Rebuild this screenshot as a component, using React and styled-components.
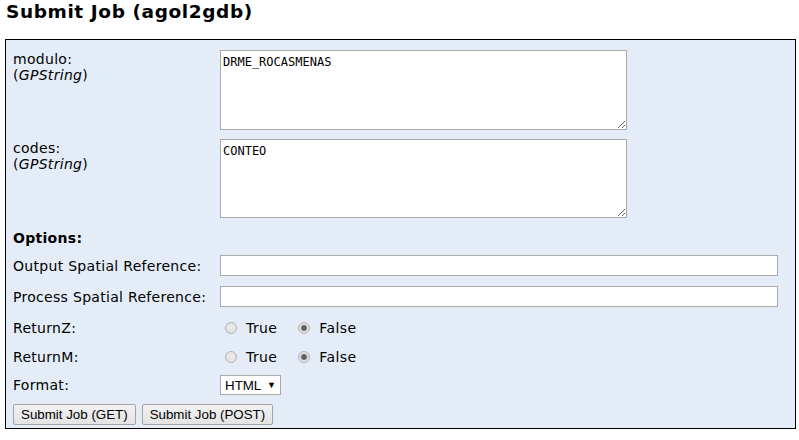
import styled, { createGlobalStyle } from 'styled-components';

const GlobalStyle = createGlobalStyle`
    html, body {
        margin: 0;
        padding: 0;
        background: #ffffff;
    }
    body {
        font-family: "DejaVu Sans", Verdana, sans-serif;
        color: #000000;
    }
`

function RadioPair({ value }) {
    return (
        <RadioGroup>
            <RadioOption>
                <RadioDot checked={value === true} />
                <RadioText>True</RadioText>
            </RadioOption>
            <RadioOption>
                <RadioDot checked={value === false} />
                <RadioText>False</RadioText>
            </RadioOption>
        </RadioGroup>
    );
}

function App() {
    return (
        <Page>
            <GlobalStyle />
            <Title>Submit Job (agol2gdb)</Title>
            <Panel>
                <Row align="start">
                    <Label pad={1}>
                        modulo:<br />
                        (<i>GPString</i>)
                    </Label>
                    <TextArea h={80} defaultValue="DRME_ROCASMENAS" />
                </Row>
                <Row align="start" top={9}>
                    <Label pad={1}>
                        codes:<br />
                        (<i>GPString</i>)
                    </Label>
                    <TextArea h={79} defaultValue="CONTEO" />
                </Row>
                <Heading>Options:</Heading>
                <Row top={9}>
                    <Label>Output Spatial Reference:</Label>
                    <TextInput />
                </Row>
                <Row top={10}>
                    <Label>Process Spatial Reference:</Label>
                    <TextInput />
                </Row>
                <Row top={11} h={20}>
                    <Label>ReturnZ:</Label>
                    <RadioPair value={false} />
                </Row>
                <Row top={9} h={20}>
                    <Label>ReturnM:</Label>
                    <RadioPair value={false} />
                </Row>
                <Row top={8} h={20}>
                    <Label>Format:</Label>
                    <FakeSelect>
                        <span>HTML</span>
                        <Arrow>▼</Arrow>
                    </FakeSelect>
                </Row>
                <ButtonBar>
                    <Button>Submit Job (GET)</Button>
                    <Button>Submit Job (POST)</Button>
                </ButtonBar>
            </Panel>
        </Page>
    );
}

const Page = styled.div`
    padding: 0 3px 0 5px;
`

const Title = styled.h2`
    margin: 0;
    padding: 1px 0 0 1px;
    height: 39px;
    box-sizing: border-box;
    font-size: 18.5px;
    line-height: 22px;
    font-weight: bold;
    letter-spacing: 0.6px;
`

const Panel = styled.div`
    border: 1px solid #000000;
    background: #e4edf7;
    padding: 10px 17px 3px 7px;
    height: 390px;
    box-sizing: border-box;
`

const Row = styled.div`
    display: grid;
    grid-template-columns: 207px 1fr;
    align-items: ${props => props.align || 'center'};
    margin-top: ${props => (props.top || 0)}px;
    min-height: ${props => (props.h || 0)}px;
`

const Label = styled.div`
    font-size: 14px;
    line-height: 16px;
    letter-spacing: 0.3px;
    padding-top: ${props => props.pad || 0}px;

    i {
        font-style: italic;
    }
`

const TextArea = styled.textarea`
    display: block;
    width: 407px;
    height: ${props => props.h}px;
    box-sizing: border-box;
    border: 1px solid #a9a9a9;
    background: #ffffff;
    padding: 4px 2px 2px;
    margin: 0;
    font-family: "DejaVu Sans Mono", monospace;
    font-size: 12px;
    line-height: 15px;
    color: #000000;
    resize: both;
    outline: none;
`

const TextInput = styled.input`
    display: block;
    width: 558px;
    height: 21px;
    box-sizing: border-box;
    border: 1px solid #a9a9a9;
    background: #ffffff;
    margin: 0;
    padding: 0 2px;
    outline: none;
`

const Heading = styled.div`
    margin-top: 12px;
    font-size: 14px;
    line-height: 16px;
    font-weight: bold;
    letter-spacing: 0.3px;
`

const RadioGroup = styled.div`
    display: flex;
    align-items: center;
    padding-left: 5px;
    gap: 21px;
`

const RadioOption = styled.label`
    display: flex;
    align-items: center;
    gap: 9px;
`

const RadioDot = styled.span`
    width: 12px;
    height: 12px;
    box-sizing: border-box;
    border-radius: 50%;
    border: 1px solid #b4b4b4;
    background: ${props => props.checked
        ? 'radial-gradient(circle, #5a5a5a 0, #6a6a6a 2.5px, #dcdcdc 3.3px, #e4e4e4 100%)'
        : 'radial-gradient(circle at 50% 40%, #ececec 0, #dcdcdc 100%)'};
`

const RadioText = styled.span`
    font-size: 14px;
    line-height: 16px;
    letter-spacing: 0.4px;
`

const FakeSelect = styled.div`
    display: flex;
    align-items: center;
    justify-content: space-between;
    width: 61px;
    height: 20px;
    box-sizing: border-box;
    border: 1px solid #a9a9a9;
    background: #ffffff;
    padding: 0 4px 0 4px;
    font-family: "Liberation Sans", Arial, sans-serif;
    font-size: 13.33px;
`

const Arrow = styled.span`
    font-size: 9px;
    color: #000000;
`

const ButtonBar = styled.div`
    display: flex;
    gap: 6px;
    margin-top: 9px;
`

const Button = styled.button`
    height: 21px;
    box-sizing: border-box;
    margin: 0;
    padding: 0 7px;
    border: 1px solid #a3a3a3;
    border-radius: 2px;
    background: linear-gradient(#f2f2f2, #e3e3e3);
    font-family: "Liberation Sans", Arial, sans-serif;
    font-size: 13.33px;
    color: #000000;
`

export default App;
